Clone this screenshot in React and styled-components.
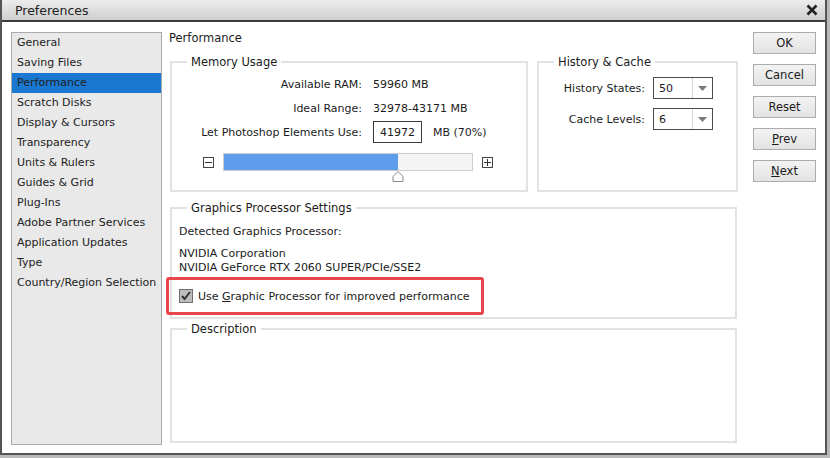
import styled, { createGlobalStyle } from "styled-components";

const Global = createGlobalStyle`
  html, body {
    margin: 0;
    padding: 0;
    background: #b9b9b9;
  }
  body {
    font-family: "DejaVu Sans", "Noto Sans", sans-serif;
    font-size: 11px;
    color: #1b1b1b;
  }
  * { box-sizing: border-box; }
`

const Window = styled.div`
  width: 827px;
  height: 455px;
  background: #fff;
  border: 2px solid #545454;
  border-top: none;
  display: flex;
  flex-direction: column;
`

const TitleBar = styled.div`
  height: 22px;
  background: linear-gradient(#ececec, #cfcfcf);
  border-bottom: 2px solid #3c3c3c;
  display: flex;
  align-items: center;
  justify-content: space-between;
  padding: 0 6px 0 13px;
  font-size: 12.5px;
  color: #222;
`

const Close = styled.div`
  width: 14px;
  height: 14px;
  display: flex;
  align-items: center;
  justify-content: center;
`

const Body = styled.div`
  flex: 1;
  display: flex;
  padding: 10px 8px 8px 9px;
`

const Nav = styled.div`
  width: 151px;
  height: 413px;
  background: #e9e9e9;
  border: 1px solid #a9a9a9;
  display: flex;
  flex-direction: column;
`

const NavItem = styled.div`
  height: 20px;
  line-height: 20px;
  padding-left: 5px;
  white-space: nowrap;
  background: ${p => (p.$active ? "#1a78d0" : "transparent")};
  color: #222;
`

const Main = styled.div`
  width: 571px;
  margin-left: 7px;
  display: flex;
  flex-direction: column;
`

const PageTitle = styled.div`
  height: 15px;
  line-height: 15px;
  margin-top: -1px;
  font-size: 11.5px;
`

const Row = styled.div`
  display: flex;
  gap: 8px;
  margin-top: 9px;
`

const Group = styled.fieldset`
  margin: ${p => p.$mt || 0}px 0 0 1px;
  padding: 0;
  width: ${p => p.$w}px;
  height: ${p => p.$h}px;
  border: 2px solid #e2e2e2;
  min-width: 0;
  position: relative;
`

const Legend = styled.legend`
  margin-left: 15px;
  padding: 0 4px;
  font-size: 11.5px;
  line-height: 14px;
`

const MemGrid = styled.div`
  display: grid;
  grid-template-columns: 190px auto;
  column-gap: 11px;
  grid-auto-rows: 24px;
  align-items: center;
  padding-top: 3px;
`

const Label = styled.div`
  text-align: right;
  white-space: nowrap;
`

const Value = styled.div`
  display: flex;
  align-items: center;
  white-space: nowrap;
`

const NumBox = styled.div`
  width: 49px;
  height: 22px;
  border: 1px solid #3a3a3a;
  display: flex;
  align-items: center;
  justify-content: center;
  margin-right: 11px;
`

const SliderRow = styled.div`
  display: flex;
  align-items: center;
  padding-left: 31px;
  margin-top: 9px;
  height: 18px;
`

const StepBtn = styled.div`
  width: 11px;
  height: 11px;
  border: 1px solid #444;
  display: flex;
  align-items: center;
  justify-content: center;
`

const Track = styled.div`
  width: 250px;
  height: 18px;
  margin: 0 9px;
  background: #f4f4f4;
  border: 1px solid #cdcdcd;
  position: relative;
`

const Fill = styled.div`
  height: 100%;
  background: #5e9cee;
`

const Thumb = styled.div`
  position: absolute;
  top: 17px;
  width: 12px;
  height: 11px;
  margin-left: -6px;
`

const HistGrid = styled.div`
  display: grid;
  grid-template-columns: 106px 60px;
  column-gap: 8px;
  row-gap: 9px;
  align-items: center;
  padding-top: 8px;
`

const Select = styled.div`
  width: 60px;
  height: 22px;
  border: 1px solid #4a4a4a;
  display: flex;
  align-items: center;
  background: #fff;
`

const SelectText = styled.div`
  flex: 1;
  padding-left: 5px;
`

const SelectArrow = styled.div`
  width: 20px;
  height: 100%;
  border-left: 1px solid #d4d4d4;
  display: flex;
  align-items: center;
  justify-content: center;
`

const GpuBody = styled.div`
  padding: 10px 0 0 7px;
  line-height: 14px;
`

const Gap = styled.div`
  height: ${p => p.$h}px;
`

const Highlight = styled.div`
  position: absolute;
  left: -6px;
  top: 62px;
  width: 318px;
  height: 38px;
  border: 3px solid #e8464c;
  border-radius: 3px;
  display: flex;
  align-items: center;
  padding-left: 10px;
  gap: 5px;
`

const Buttons = styled.div`
  display: flex;
  flex-direction: column;
  gap: 10px;
  margin-left: 13px;
`

const Button = styled.div`
  width: 63px;
  height: 22px;
  border: 1px solid #acacac;
  background: linear-gradient(#f3f3f3, #e3e3e3);
  display: flex;
  align-items: center;
  justify-content: center;
  font-size: 11.5px;
  u { text-decoration: underline; }
`

const navItems = [
  "General", "Saving Files", "Performance", "Scratch Disks", "Display & Cursors",
  "Transparency", "Units & Rulers", "Guides & Grid", "Plug-Ins",
  "Adobe Partner Services", "Application Updates", "Type", "Country/Region Selection",
];

function Arrow() {
  return (
    <SelectArrow>
      <svg width="9" height="5" viewBox="0 0 9 5"><path d="M0 0h9L4.5 5z" fill="#7a7a7a" /></svg>
    </SelectArrow>
  );
}

export default function App() {
  const pct = 70;
  return (
    <>
      <Global />
      <Window>
        <TitleBar>
          <span>Preferences</span>
          <Close>
            <svg width="12" height="12" viewBox="0 0 12 12">
              <path d="M1.5 1.5l9 9M10.5 1.5l-9 9" stroke="#222" strokeWidth="2.6" />
            </svg>
          </Close>
        </TitleBar>
        <Body>
          <Nav>
            {navItems.map(n => (
              <NavItem key={n} $active={n === "Performance"}>{n}</NavItem>
            ))}
          </Nav>
          <Main>
            <PageTitle>Performance</PageTitle>
            <Row>
              <Group $w={358} $h={137}>
                <Legend>Memory Usage</Legend>
                <MemGrid>
                  <Label>Available RAM:</Label>
                  <Value>59960 MB</Value>
                  <Label>Ideal Range:</Label>
                  <Value>32978-43171 MB</Value>
                  <Label>Let Photoshop Elements Use:</Label>
                  <Value><NumBox>41972</NumBox>MB (70%)</Value>
                </MemGrid>
                <SliderRow>
                  <StepBtn>
                    <svg width="7" height="7" viewBox="0 0 7 7"><path d="M0 3.5h7" stroke="#333" /></svg>
                  </StepBtn>
                  <Track>
                    <Fill style={{ width: `${pct}%` }} />
                    <Thumb style={{ left: `${pct}%` }}>
                      <svg width="12" height="11" viewBox="0 0 12 11">
                        <path d="M6 0.5L11 5.5V10.5H1V5.5z" fill="#fff" stroke="#8a8a8a" strokeLinejoin="round" />
                      </svg>
                    </Thumb>
                  </Track>
                  <StepBtn>
                    <svg width="7" height="7" viewBox="0 0 7 7"><path d="M0 3.5h7M3.5 0v7" stroke="#333" /></svg>
                  </StepBtn>
                </SliderRow>
              </Group>
              <Group $w={201} $h={137}>
                <Legend>History &amp; Cache</Legend>
                <HistGrid>
                  <Label>History States:</Label>
                  <Select><SelectText>50</SelectText><Arrow /></Select>
                  <Label>Cache Levels:</Label>
                  <Select><SelectText>6</SelectText><Arrow /></Select>
                </HistGrid>
              </Group>
            </Row>
            <Group $w={567} $h={118} $mt={9}>
              <Legend>Graphics Processor Settings</Legend>
              <GpuBody>
                <div>Detected Graphics Processor:</div>
                <Gap $h={8} />
                <div>NVIDIA Corporation</div>
                <div>NVIDIA GeForce RTX 2060 SUPER/PCIe/SSE2</div>
              </GpuBody>
              <Highlight>
                <svg width="14" height="14" viewBox="0 0 14 14">
                  <rect x="0.5" y="0.5" width="13" height="13" fill="#bdbdbd" stroke="#6f6f6f" />
                  <path d="M3 7l2.6 3L11 3" fill="none" stroke="#333" strokeWidth="2" />
                </svg>
                <span>Use <u>G</u>raphic Processor for improved performance</span>
              </Highlight>
            </Group>
            <Group $w={567} $h={121} $mt={3}>
              <Legend>Description</Legend>
            </Group>
          </Main>
          <Buttons>
            <Button>OK</Button>
            <Button>Cancel</Button>
            <Button>Reset</Button>
            <Button><span><u>P</u>rev</span></Button>
            <Button><span><u>N</u>ext</span></Button>
          </Buttons>
        </Body>
      </Window>
    </>
  );
}
